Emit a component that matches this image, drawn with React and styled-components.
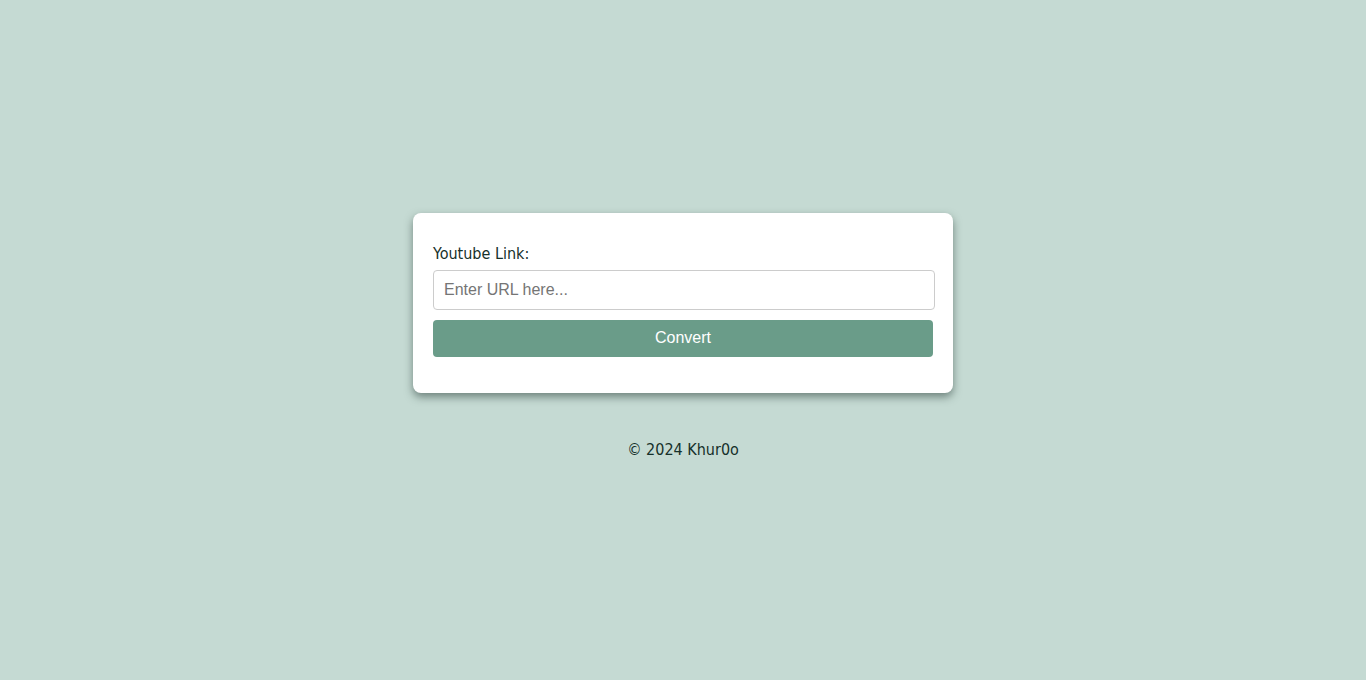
import React from "react";
import styled, { createGlobalStyle } from "styled-components";

const GlobalStyle = createGlobalStyle`
  html, body { margin: 0; padding: 0; height: 100%; }
  body {
    background: #c5dad3;
    font-family: "DejaVu Sans Condensed", "DejaVu Sans", sans-serif;
    color: #16302a;
  }
  #root { min-height: 100vh; }
`;

const Page = styled.div`
  min-height: 100vh;
  display: flex;
  flex-direction: column;
  align-items: center;
  justify-content: center;
  padding-bottom: 9px;
  box-sizing: border-box;
`;

const Card = styled.div`
  width: 540px;
  box-sizing: border-box;
  background: #ffffff;
  border-radius: 8px;
  padding: 31px 20px 36px;
  box-shadow: 0 4px 8px rgba(40, 60, 55, 0.55);
`;

const Label = styled.label`
  display: block;
  font-size: 16px;
  line-height: 19px;
  margin-bottom: 7px;
  color: #16302a;
`;

const Input = styled.input`
  display: block;
  width: calc(100% + 2px);
  height: 40px;
  box-sizing: border-box;
  padding: 0 10px;
  border: 1px solid #cccccc;
  border-radius: 4px;
  font-family: "Liberation Sans", Arial, sans-serif;
  font-size: 16px;
  color: #222;
  outline: none;
  &::placeholder { color: #757575; }
`;

const Button = styled.button`
  display: block;
  width: 100%;
  height: 37px;
  margin-top: 10px;
  border: none;
  border-radius: 4px;
  background: #6a9c89;
  color: #ffffff;
  font-family: "Liberation Sans", Arial, sans-serif;
  font-size: 16px;
  cursor: pointer;
`;

const Footer = styled.footer`
  margin-top: 47px;
  font-size: 16px;
  line-height: 19px;
  color: #16302a;
`;

export default function App() {
  return (
    <>
      <GlobalStyle />
      <Page>
        <Card>
          <Label htmlFor="url">Youtube Link:</Label>
          <Input id="url" type="text" placeholder="Enter URL here..." />
          <Button type="button">Convert</Button>
        </Card>
        <Footer>© 2024 Khur0o</Footer>
      </Page>
    </>
  );
}
